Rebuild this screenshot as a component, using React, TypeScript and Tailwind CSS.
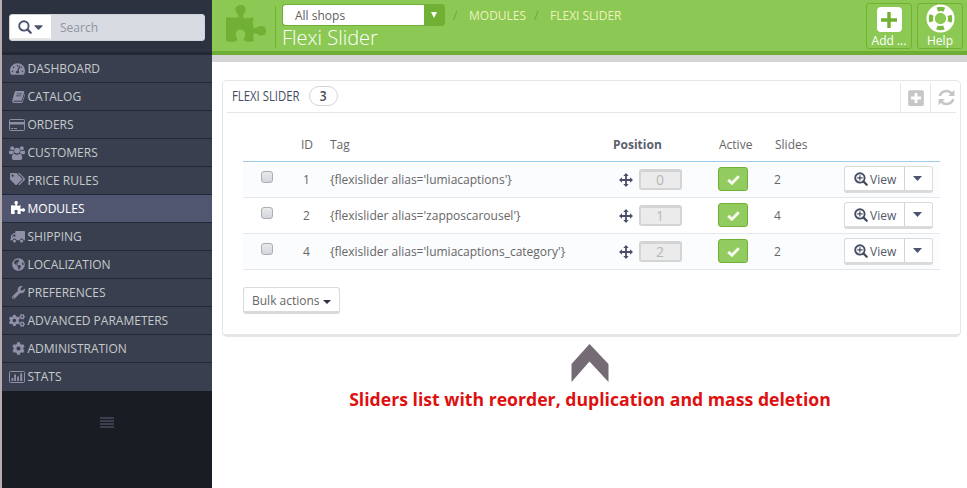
import React from "react";
import {
  FaTachometerAlt, FaTags, FaGlobeAmericas,
  FaWrench, FaCogs, FaCog, FaPlusSquare, FaCaretDown,
} from "react-icons/fa";

function Puzzle({ className }: { className?: string }) {
  return (
    <svg viewBox="0 0 40 37" className={className} fill="currentColor">
      <path d="M0 12.5C3.5 11.8 8 13.2 11.5 12.6C13.5 12 12.6 10 11 8.4C9 6 9 2.6 11.2 1.1C13 -.3 16.6 -.3 18.3 1.3C20.3 3.2 19.8 6 18.4 8.2C17 10.4 16.2 12.3 18 12.9C20.5 13.6 24.4 12.8 27.5 12.2C27 15.5 26.6 19.5 27.4 22.2C28.4 24 30.4 23 32.2 21.7C34.3 20.5 37.4 20.6 39 22.4C40.5 24.3 40.3 27.8 38.6 29.4C36.6 31 34 30.8 31.8 29.3C30 28 28 27.6 27.4 29.6C27 32 27.4 34.8 28.2 36C25.2 37 21.4 37.2 18.6 36C17.3 34.6 18.3 32.4 19 31C19.8 28 18.6 24.8 14.6 24.6C10.6 24.6 9.2 28 10 30.6C10.6 32.8 12 34.8 10.4 36.2C7.6 37.4 3.2 37 0 36Z" />
    </svg>
  );
}

function Search({ className, plus }: { className?: string; plus?: boolean }) {
  return (
    <svg viewBox="0 0 14 14" className={className} fill="none" stroke="currentColor">
      <circle cx="5.9" cy="5.9" r="4.7" strokeWidth="1.9" />
      <path d="M9.4 9.4L12.7 12.7" strokeWidth="2.3" strokeLinecap="round" />
      {plus && <path d="M3.2 5.9h5.4M5.9 3.2v5.4" strokeWidth="1.2" />}
    </svg>
  );
}

function Book() {
  return (
    <svg viewBox="0 0 13 12" className="h-[12px] w-[13px]" fill="currentColor">
      <path d="M4 0H11.4Q12.6 .2 12.2 1.6L9.9 9Q9.6 9.8 8.6 9.8H2Q1.2 10 1.5 10.7H9.4Q10.2 10.7 10.5 9.9L12.6 3Q13.2 3.4 12.9 4.2L10.9 10.7Q10.5 12 9.2 12H1.8Q0 11.8 .2 9.8L2.6 1.2Q3 0 4 0Z" />
      <path d="M4.6 2.8H10M4 4.8H9.4" stroke="#3a3f50" strokeWidth=".7" />
    </svg>
  );
}

function Card() {
  return (
    <svg viewBox="0 0 16 12" className="h-[12px] w-[16px]" fill="currentColor">
      <rect x=".5" y=".5" width="15" height="11" rx="1" fill="none" stroke="currentColor" />
      <path d="M1 3H15V5.5H1ZM2 9H4.2V10H2ZM5 9H8V10H5Z" />
    </svg>
  );
}

function Users() {
  return (
    <svg viewBox="0 0 16 14" className="h-[14px] w-[16px]" fill="currentColor">
      <circle cx="3.2" cy="2.2" r="2" />
      <circle cx="12.8" cy="2.2" r="2" />
      <circle cx="8" cy="4.6" r="2.9" />
      <path d="M0 7V5.8Q0 4.3 1.2 4.4Q3 5.3 4.6 4.6Q4.5 6.3 5.3 7.2Q4 7.3 3.2 8.2H1.4Q0 8.2 0 7ZM16 7V5.8Q16 4.3 14.8 4.4Q13 5.3 11.4 4.6Q11.5 6.3 10.7 7.2Q12 7.3 12.8 8.2H14.6Q16 8.2 16 7Z" />
      <path d="M5.2 7.7Q8 9.6 10.8 7.7Q13.2 8.2 13.2 12Q13 14 11.3 14H4.7Q3 14 2.8 12Q2.8 8.2 5.2 7.7Z" />
    </svg>
  );
}

function Truck() {
  return (
    <svg viewBox="0 0 15 12" className="h-[12px] w-[15px]" fill="currentColor">
      <path fillRule="evenodd" d="M6 0H14.2Q15 0 15 .8V9.2H13.7A2.1 2.1 0 0 0 9.6 9.2H6.6A2.1 2.1 0 0 0 2.5 9.2H0V8.6L1 8V5.2Q1 4.7 1.4 4.3L3.2 2.4Q3.5 2 4.2 2H5.3V.8Q5.3 0 6 0ZM2.1 5.6H5.3V3.2H4.1L2.1 5.2Z" />
      <circle cx="4.5" cy="10" r="1.6" />
      <circle cx="11.6" cy="10" r="1.6" />
    </svg>
  );
}

function Stats() {
  return (
    <svg viewBox="0 0 16 12" className="h-[12px] w-[16px]" fill="currentColor">
      <rect x=".5" y=".5" width="15" height="11" rx="1" fill="none" stroke="currentColor" />
      <path d="M2.5 7H4.3V10H2.5ZM5.2 3.5H7V10H5.2ZM8.2 5.5H10V10H8.2ZM11.2 2.3H13.2V10H11.2Z" />
    </svg>
  );
}

function Check() {
  return (
    <svg viewBox="0 0 13 10" className="mt-px h-[10px] w-[13px]" fill="none" stroke="#f6f8ec" strokeWidth="3">
      <path d="M1.2 4.8L4.9 8.2L11.8 1.2" />
    </svg>
  );
}

function Move() {
  return (
    <svg viewBox="0 0 14 14" className="size-[14px]" fill="#4a4f63">
      <path d="M7 0L9.7 3H7.9V6.1H11V4.3L14 7L11 9.7V7.9H7.9V11H9.7L7 14L4.3 11H6.1V7.9H3V9.7L0 7L3 4.3V6.1H6.1V3H4.3Z" />
    </svg>
  );
}

function Ring() {
  return (
    <svg viewBox="0 0 30 30" className="size-[29px]" fill="none">
      <circle cx="15" cy="15" r="10.2" stroke="#fff" strokeWidth="8.6" />
      <circle cx="15" cy="15" r="9.9" stroke="#7bba40" strokeWidth="4.4" strokeDasharray="7.4 8.15" strokeDashoffset="3.7" />
    </svg>
  );
}

function Refresh() {
  return (
    <svg viewBox="0 0 17 17" className="h-[17px] w-[17px]" fill="none" stroke="#c5c6c7" strokeWidth="2.6">
      <path d="M1.8 7A6.7 6.2 0 0 1 13.6 4.4M15.2 10A6.7 6.2 0 0 1 3.4 12.6" />
      <path d="M16.4 .8V7H10.2ZM.6 16.2V10H6.8Z" fill="#c5c6c7" stroke="none" />
    </svg>
  );
}

const menu = [
  { label: "DASHBOARD", icon: <FaTachometerAlt className="h-[14px] w-[15px]" /> },
  { label: "CATALOG", icon: <Book /> },
  { label: "ORDERS", icon: <Card /> },
  { label: "CUSTOMERS", icon: <Users /> },
  { label: "PRICE RULES", icon: <FaTags className="mb-[3px] h-[14px] w-[15px]" /> },
  { label: "MODULES", icon: <Puzzle className="mb-[2px] h-[13px] w-[14px]" />, active: true },
  { label: "SHIPPING", icon: <Truck /> },
  { label: "LOCALIZATION", icon: <FaGlobeAmericas className="size-[13px]" /> },
  { label: "PREFERENCES", icon: <FaWrench className="size-[13px]" /> },
  { label: "ADVANCED PARAMETERS", icon: <FaCogs className="h-[15px] w-[16px]" /> },
  { label: "ADMINISTRATION", icon: <FaCog className="size-[13px]" /> },
  { label: "STATS", icon: <Stats /> },
];

const rows = [
  { id: 1, tag: "{flexislider alias='lumiacaptions'}", position: 0, slides: 2 },
  { id: 2, tag: "{flexislider alias='zapposcarousel'}", position: 1, slides: 4 },
  { id: 4, tag: "{flexislider alias='lumiacaptions_category'}", position: 2, slides: 2 },
];

const columns = "grid grid-cols-[49px_38px_283px_100px_62px_69px_96px] items-center";

function Sidebar() {
  return (
    <aside className="flex w-[212px] shrink-0 flex-col border-l-2 border-[#b9acb0] bg-[#191c23]">
      <div className="h-[55px] border-b-[3px] border-[#242833] bg-[#2d3241] px-[7px] pt-[14px]">
        <div className="flex h-[27px] w-[196px] overflow-hidden rounded-[3px] border border-[#d0d2d7] bg-[#d8dbe2]">
          <div className="flex w-[41px] items-center gap-[2px] border-b-2 border-[#e6e6e6] bg-white pl-2 text-[#4c5370]">
            <Search className="size-[14px]" />
            <FaCaretDown className="h-[14px] w-[9px]" />
          </div>
          <span className="pl-[9px] text-[12px] leading-[26px] text-[#8f95a0]">Search</span>
        </div>
      </div>
      <nav>
        {menu.map((m) => (
          <div
            key={m.label}
            className={
              "flex h-[28px] items-center border-b pl-[7px] " +
              (m.label === "STATS" ? "border-[#3a3f50] " : "border-[#22283a] ") +
              (m.active ? "bg-[#50566f] text-white" : "bg-[#3a3f50] text-[#c5cbcb]")
            }
          >
            <span className={"flex w-[16px] justify-end " + (m.active ? "text-white" : "text-[#8f8fa6]")}>{m.icon}</span>
            <span className="pl-[2.5px] text-[12px] whitespace-nowrap">{m.label}</span>
          </div>
        ))}
      </nav>
      <div className="mt-[26px] flex flex-col items-center gap-px">
        {[0, 1, 2, 3].map((i) => (
          <div key={i} className="h-[2px] w-[14px] bg-[#3a3f50]" />
        ))}
      </div>
    </aside>
  );
}

function Header() {
  return (
    <header className="flex h-[62px] border-b-[7px] border-[#d5d5d5]">
      <div className="flex flex-1 border-b-4 border-[#6fae35] bg-[#8cc954]">
        <Puzzle className="mt-[5px] ml-[14px] h-[37px] w-[40px] shrink-0 text-[#70b035]" />
        <div className="mt-[6px] ml-[9px] h-[42px] w-px bg-[#70b035]" />
        <div className="ml-[6px] flex w-[400px] flex-col pt-[4px]">
          <div className="flex h-[22px]">
            <div className="flex w-[163px] rounded-[3px] border border-[#70b035] bg-[#70b035]">
              <div className="h-[20px] w-[141px] rounded-l-[3px] bg-white pl-[12px] text-[12px] leading-[22px] text-[#606060]">All shops</div>
              <div className="flex flex-1 items-center justify-center">
                <svg viewBox="0 0 6 6" className="size-[6px]" fill="#fff"><path d="M0 0H6L3 6Z" /></svg>
              </div>
            </div>
            <div className="flex pl-[8px] text-[12px] leading-[23px] whitespace-nowrap text-[#eef0bd]">
              <span className="w-[16px] text-[#6ba832]">/</span>
              <span className="w-[65px]">MODULES</span>
              <span className="w-[16px] text-[#6ba832]">/</span>
              <span>FLEXI SLIDER</span>
            </div>
          </div>
          <h1 className="mt-[-1px] text-[20px] leading-[25px] font-light whitespace-nowrap text-white">Flexi Slider</h1>
        </div>
        <div className="mt-[3px] mr-[4px] ml-auto flex gap-[5px] text-center text-[12px] leading-[15px] text-white">
          <div className="flex h-[46px] w-[46px] flex-col items-center rounded-[3px] border border-[#72b034]">
            <div className="mt-[3px] flex size-[25px] items-center justify-center rounded-[4px] bg-white">
              <svg viewBox="0 0 16 16" className="size-4" stroke="#72b034" strokeWidth="3.4"><path d="M0 8H16M8 0V16" /></svg>
            </div>
            <span className="mt-px">Add ...</span>
          </div>
          <div className="flex h-[46px] w-[46px] flex-col items-center rounded-[3px] border border-[#72b034]">
            <Ring />
            <span>Help</span>
          </div>
        </div>
      </div>
    </header>
  );
}

function Panel() {
  return (
    <section className="mt-[18px] ml-[10px] h-[257px] w-[739px] rounded-[5px] border border-b-[3px] border-[#e6e6e6] bg-white">
      <div className="mx-[4px] flex h-[32px] border-b border-[#e6e6e6] pl-[5px]">
        <div className="w-[77px] text-[#454a5e]">
          <span className="inline-block origin-left scale-x-[0.81] text-[14px] leading-[30px] whitespace-nowrap">FLEXI SLIDER</span>
        </div>
        <div className="mt-[5px] h-[20px] w-[29px] rounded-full border border-[#d3d3da] text-center text-[15px] leading-[17px] font-semibold text-[#454a5e]">
          <span className="inline-block scale-x-[0.8]">3</span>
        </div>
        <div className="mt-[2px] -mr-px ml-auto flex">
          <div className="flex w-[30px] items-center justify-center border-l border-[#e6e6e6]"><FaPlusSquare className="h-[18px] w-[18px] text-[#c5c6c7]" /></div>
          <div className="mr-px flex w-[26px] items-center justify-end border-l border-[#e6e6e6] pr-px"><Refresh /></div>
        </div>
      </div>
      <div className="mt-[16px] ml-[20px] w-[697px] text-[12px] text-[#666]">
        <div className={columns + " h-[33px] border-b border-[#a0cbe8]"}>
          <span />
          <span className="pl-[9px]">ID</span>
          <span>Tag</span>
          <span className="font-bold text-[#5b5f6b]">Position</span>
          <span className="pl-[6px]">Active</span>
          <span>Slides</span>
          <span />
        </div>
        {rows.map((r) => (
          <div key={r.id} className={columns + " h-[36px] border-b border-[#e6e7ea] odd:bg-white even:bg-[#fbfcfe]"}>
            <span className="mb-[5px] ml-[18px] size-[12px] rounded-[3px] border border-[#a9afad] bg-linear-to-b from-[#e9eaea] to-[#d3d5e0]" />
            <span className="pl-[11px]">{r.id}</span>
            <span className="whitespace-nowrap">{r.tag}</span>
            <div className="flex items-center gap-[6px] pl-[6px]">
              <Move />
              <div className="mb-px h-[21px] w-[43px] rounded-[3px] border-2 border-t-[3px] border-[#d3d4d6] bg-[#ebebeb] pr-px text-center text-[14px] leading-[15px] text-[#b3bab5]">{r.position}</div>
            </div>
            <div className="mb-px ml-[5px] flex h-[24px] w-[30px] items-center justify-center rounded-[3px] border border-[#72b034] bg-[#92cc60]">
              <Check />
            </div>
            <span className="-ml-px">{r.slides}</span>
            <div className="flex h-[27px] w-[89px] rounded-[3px] border border-b-[3px] border-[#dadada] bg-white">
              <div className="flex w-[60px] items-center border-r border-[#d3d3d3] pl-[9px] text-[#50586a]">
                <Search plus className="mr-[2px] size-[14px] text-[#454b62]" /><span className="pt-[2px]">View</span>
              </div>
              <div className="flex w-[25px] items-center justify-center text-[#4c5370]">
                <svg viewBox="0 0 9 5" className="h-[5px] w-[9px]" fill="currentColor"><path d="M0 0H9L4.5 5Z" /></svg>
              </div>
            </div>
          </div>
        ))}
        <div className="mt-[17px] flex h-[27px] w-[97px] items-center gap-[3px] rounded-[3px] border border-b-[3px] border-[#dadada] pt-[3px] pl-[8px] whitespace-nowrap">
          Bulk actions
          <svg viewBox="0 0 8 4" className="mt-[2px] h-[4px] w-[8px]" fill="#2b3042"><path d="M0 0H8L4 4Z" /></svg>
        </div>
      </div>
    </section>
  );
}

export default function App() {
  return (
    <div className="flex h-[488px] w-[967px] overflow-hidden bg-white font-['Open_Sans',sans-serif]">
      <Sidebar />
      <main className="min-w-0 flex-1">
        <Header />
        <Panel />
        <div className="flex w-[756px] flex-col items-center pt-[7px]">
          <svg viewBox="0 0 38 38" className="h-[38px] w-[38px]" fill="#756b75"><path d="M18.5 0L37.5 20V38L18.5 17.5L.5 38V20Z" /></svg>
          <p className="mt-[5px] text-[17.65px] leading-[24px] font-bold whitespace-nowrap text-[#de1010]">Sliders list with reorder, duplication and mass deletion</p>
        </div>
      </main>
    </div>
  );
}
